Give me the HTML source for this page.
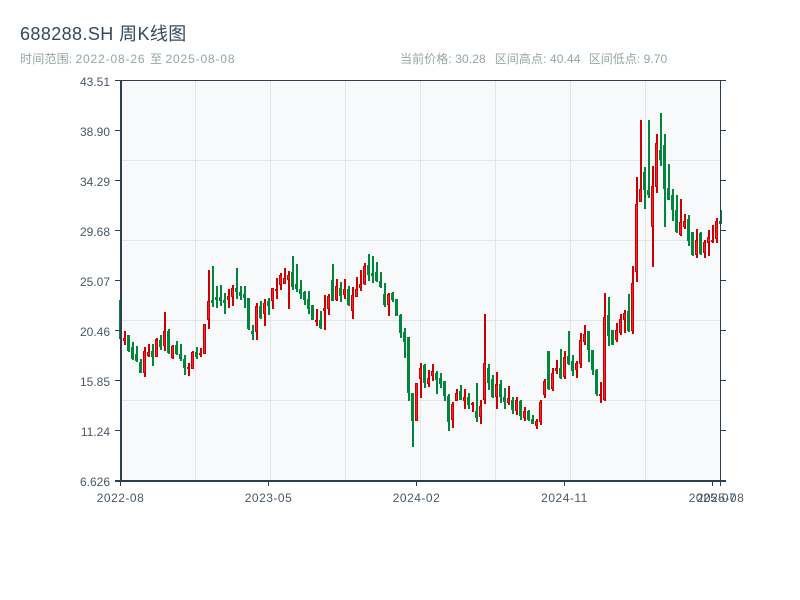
<!DOCTYPE html>
<html lang="zh"><head><meta charset="utf-8"><title>688288.SH 周K线图</title>
<style>html,body{margin:0;padding:0;background:#fff}svg{display:block}text{font-family:"Liberation Sans","Noto Sans CJK SC",sans-serif}</style></head>
<body>
<svg width="800" height="600" viewBox="0 0 800 600" xmlns="http://www.w3.org/2000/svg">
<rect x="120" y="80" width="600" height="400" fill="#f8f9fb"/>
<path shape-rendering="crispEdges" fill="#e1e4e9" d="M195 81h1V480h-1zM270 81h1V480h-1zM345 81h1V480h-1zM420 81h1V480h-1zM495 81h1V480h-1zM570 81h1V480h-1zM645 81h1V480h-1zM122 160H720v1H122zM122 240H720v1H122zM122 320H720v1H122zM122 400H720v1H122z"/>
<path shape-rendering="crispEdges" fill="#00873c" d="M119 300h3V339h-3zM128 335h2V352h-2zM127 335h3V351h-3zM132 342h2V360h-2zM131 347h3V359h-3zM136 346h2V362h-2zM135 354h3V361h-3zM140 359h2V373h-2zM139 362h3V373h-3zM152 344h2V366h-2zM151 351h3V357h-3zM160 335h2V350h-2zM159 340h3V347h-3zM168 329h2V354h-2zM167 331h3V353h-3zM176 341h2V355h-2zM175 345h3V354h-3zM180 344h2V361h-2zM179 354h3V359h-3zM184 355h2V375h-2zM183 359h3V368h-3zM196 347h2V359h-2zM195 352h3V357h-3zM212 266h2V307h-2zM211 300h3V303h-3zM216 286h2V308h-2zM215 297h3V300h-3zM220 285h2V306h-2zM219 297h3V301h-3zM224 293h2V314h-2zM223 300h3V303h-3zM236 268h2V299h-2zM235 288h3V292h-3zM240 286h2V300h-2zM239 292h3V296h-3zM244 286h2V308h-2zM243 294h3V298h-3zM248 298h2V330h-2zM247 298h3V329h-3zM252 325h2V340h-2zM251 331h3V334h-3zM260 301h2V319h-2zM259 306h3V318h-3zM268 298h2V315h-2zM267 301h3V306h-3zM292 256h2V290h-2zM291 272h3V287h-3zM296 264h2V292h-2zM295 284h3V289h-3zM300 280h2V299h-2zM299 289h3V294h-3zM304 291h2V305h-2zM303 292h3V300h-3zM308 291h2V314h-2zM307 299h3V309h-3zM312 305h2V320h-2zM311 305h3V320h-3zM320 311h2V329h-2zM319 320h3V328h-3zM332 264h2V301h-2zM331 280h3V301h-3zM340 282h2V302h-2zM339 288h3V296h-3zM348 286h2V306h-2zM347 289h3V305h-3zM368 254h2V281h-2zM367 265h3V275h-3zM372 256h2V283h-2zM371 273h3V276h-3zM376 262h2V282h-2zM375 272h3V281h-3zM380 272h2V288h-2zM379 281h3V287h-3zM384 283h2V307h-2zM383 294h3V305h-3zM392 292h2V302h-2zM391 293h3V300h-3zM396 299h2V316h-2zM395 299h3V316h-3zM400 314h2V338h-2zM399 315h3V333h-3zM404 328h2V358h-2zM403 332h3V342h-3zM408 337h2V401h-2zM407 337h3V393h-3zM412 393h2V447h-2zM411 393h3V421h-3zM424 364h2V388h-2zM423 365h3V383h-3zM436 371h2V394h-2zM435 373h3V380h-3zM440 373h2V388h-2zM439 378h3V384h-3zM444 381h2V401h-2zM443 381h3V396h-3zM448 394h2V431h-2zM447 396h3V422h-3zM460 385h2V400h-2zM459 391h3V400h-3zM468 393h2V409h-2zM467 397h3V405h-3zM476 383h2V422h-2zM475 411h3V418h-3zM488 364h2V390h-2zM487 368h3V383h-3zM492 375h2V398h-2zM491 379h3V397h-3zM500 380h2V403h-2zM499 384h3V397h-3zM504 388h2V409h-2zM503 397h3V402h-3zM512 397h2V414h-2zM511 400h3V410h-3zM520 400h2V420h-2zM519 401h3V416h-3zM528 410h2V421h-2zM527 411h3V420h-3zM532 415h2V424h-2zM531 419h3V424h-3zM548 351h2V390h-2zM547 351h3V389h-3zM560 349h2V379h-2zM559 368h3V378h-3zM568 331h2V365h-2zM567 356h3V364h-3zM572 355h2V376h-2zM571 361h3V371h-3zM588 331h2V362h-2zM587 331h3V350h-3zM592 350h2V375h-2zM591 350h3V370h-3zM596 369h2V396h-2zM595 370h3V394h-3zM608 297h2V346h-2zM607 315h3V336h-3zM612 330h2V345h-2zM611 330h3V345h-3zM628 294h2V332h-2zM627 311h3V331h-3zM644 167h2V209h-2zM643 172h3V190h-3zM648 120h2V198h-2zM647 190h3V195h-3zM660 113h2V166h-2zM659 150h3V160h-3zM664 134h2V227h-2zM663 145h3V189h-3zM668 164h2V200h-2zM667 188h3V200h-3zM672 189h2V221h-2zM671 195h3V210h-3zM676 195h2V233h-2zM675 210h3V232h-3zM688 215h2V246h-2zM687 219h3V241h-3zM692 232h2V256h-2zM691 232h3V255h-3zM700 232h2V255h-2zM699 233h3V254h-3zM720 210h2V224h-2zM719 221h3V224h-3z"/>
<path shape-rendering="crispEdges" fill="#cc0000" d="M124 331h2V345h-2zM123 338h3V341h-3zM144 347h2V377h-2zM143 351h3V373h-3zM148 344h2V357h-2zM147 352h3V356h-3zM156 338h2V357h-2zM155 339h3V357h-3zM164 312h2V351h-2zM163 331h3V346h-3zM172 345h2V359h-2zM171 346h3V358h-3zM188 363h2V376h-2zM187 367h3V369h-3zM192 351h2V369h-2zM191 352h3V369h-3zM200 348h2V357h-2zM199 353h3V355h-3zM204 324h2V354h-2zM203 324h3V354h-3zM208 270h2V329h-2zM207 301h3V320h-3zM228 289h2V308h-2zM227 296h3V300h-3zM232 285h2V306h-2zM231 288h3V297h-3zM256 303h2V340h-2zM255 306h3V332h-3zM264 299h2V326h-2zM263 303h3V314h-3zM272 288h2V309h-2zM271 288h3V301h-3zM276 278h2V299h-2zM275 289h3V291h-3zM280 273h2V290h-2zM279 275h3V285h-3zM284 268h2V284h-2zM283 278h3V284h-3zM288 271h2V309h-2zM287 275h3V280h-3zM316 309h2V326h-2zM315 320h3V322h-3zM324 295h2V330h-2zM323 308h3V311h-3zM328 294h2V315h-2zM327 296h3V309h-3zM336 279h2V301h-2zM335 286h3V300h-3zM344 279h2V299h-2zM343 289h3V295h-3zM352 287h2V319h-2zM351 295h3V311h-3zM356 277h2V297h-2zM355 289h3V297h-3zM360 270h2V291h-2zM359 284h3V288h-3zM364 263h2V285h-2zM363 266h3V284h-3zM388 293h2V316h-2zM387 294h3V305h-3zM416 383h2V421h-2zM415 383h3V421h-3zM420 363h2V398h-2zM419 368h3V379h-3zM428 370h2V387h-2zM427 378h3V384h-3zM432 364h2V381h-2zM431 371h3V376h-3zM452 402h2V428h-2zM451 404h3V420h-3zM456 389h2V401h-2zM455 393h3V401h-3zM464 389h2V409h-2zM463 397h3V401h-3zM472 402h2V412h-2zM471 403h3V405h-3zM480 400h2V424h-2zM479 406h3V417h-3zM484 314h2V404h-2zM483 363h3V400h-3zM496 372h2V409h-2zM495 384h3V397h-3zM508 386h2V405h-2zM507 398h3V403h-3zM516 397h2V415h-2zM515 400h3V411h-3zM524 407h2V421h-2zM523 411h3V418h-3zM536 419h2V429h-2zM535 421h3V426h-3zM540 400h2V425h-2zM539 402h3V422h-3zM544 379h2V398h-2zM543 381h3V395h-3zM552 368h2V391h-2zM551 373h3V389h-3zM556 360h2V374h-2zM555 368h3V371h-3zM564 351h2V379h-2zM563 357h3V377h-3zM576 361h2V378h-2zM575 363h3V370h-3zM580 333h2V368h-2zM579 340h3V364h-3zM584 325h2V345h-2zM583 334h3V342h-3zM600 382h2V403h-2zM599 394h3V396h-3zM604 293h2V401h-2zM603 317h3V400h-3zM616 323h2V342h-2zM615 330h3V340h-3zM620 314h2V335h-2zM619 319h3V333h-3zM624 310h2V333h-2zM623 313h3V320h-3zM632 266h2V334h-2zM631 283h3V331h-3zM636 177h2V282h-2zM635 204h3V272h-3zM640 120h2V202h-2zM639 189h3V202h-3zM652 166h2V267h-2zM651 186h3V227h-3zM656 134h2V193h-2zM655 143h3V187h-3zM680 199h2V236h-2zM679 222h3V235h-3zM684 214h2V229h-2zM683 221h3V227h-3zM696 229h2V258h-2zM695 240h3V255h-3zM704 240h2V258h-2zM703 242h3V253h-3zM708 230h2V256h-2zM707 237h3V243h-3zM712 225h2V243h-2zM711 240h3V242h-3zM716 218h2V243h-2zM715 221h3V239h-3z"/>
<path shape-rendering="crispEdges" fill="#f5222d" d="M124 339h1V340h-1zM144 352h1V372h-1zM148 353h1V355h-1zM156 340h1V356h-1zM164 332h1V345h-1zM172 347h1V357h-1zM192 353h1V368h-1zM204 325h1V353h-1zM208 302h1V319h-1zM228 297h1V299h-1zM232 289h1V296h-1zM256 307h1V331h-1zM264 304h1V313h-1zM272 289h1V300h-1zM280 276h1V284h-1zM284 279h1V283h-1zM288 276h1V279h-1zM324 309h1V310h-1zM328 297h1V308h-1zM336 287h1V299h-1zM344 290h1V294h-1zM352 296h1V310h-1zM356 290h1V296h-1zM360 285h1V287h-1zM364 267h1V283h-1zM388 295h1V304h-1zM416 384h1V420h-1zM420 369h1V378h-1zM428 379h1V383h-1zM432 372h1V375h-1zM452 405h1V419h-1zM456 394h1V400h-1zM464 398h1V400h-1zM480 407h1V416h-1zM484 364h1V399h-1zM496 385h1V396h-1zM508 399h1V402h-1zM516 401h1V410h-1zM524 412h1V417h-1zM536 422h1V425h-1zM540 403h1V421h-1zM544 382h1V394h-1zM552 374h1V388h-1zM556 369h1V370h-1zM564 358h1V376h-1zM576 364h1V369h-1zM580 341h1V363h-1zM584 335h1V341h-1zM604 318h1V399h-1zM616 331h1V339h-1zM620 320h1V332h-1zM624 314h1V319h-1zM632 284h1V330h-1zM636 205h1V271h-1zM640 190h1V201h-1zM652 187h1V226h-1zM656 144h1V186h-1zM680 223h1V234h-1zM684 222h1V226h-1zM696 241h1V254h-1zM704 243h1V252h-1zM708 238h1V242h-1zM716 222h1V238h-1z"/>
<path shape-rendering="crispEdges" fill="#2c3e50" d="M120 80h2V482h-2zM115 80H726v1H115zM115 480H726v2H115zM720 80h1V482h-1zM115 130h5v1h-5zM115 180h5v1h-5zM115 230h5v1h-5zM115 280h5v1h-5zM115 330h5v1h-5zM115 380h5v1h-5zM115 430h5v1h-5zM721 130h5v1h-5zM721 180h5v1h-5zM721 230h5v1h-5zM721 280h5v1h-5zM721 330h5v1h-5zM721 380h5v1h-5zM721 430h5v1h-5zM120 482h1v4h-1zM268 482h1v4h-1zM416 482h1v4h-1zM564 482h1v4h-1zM712 482h1v4h-1zM720 482h1v4h-1z"/>
<text x="20" y="40" font-size="18" fill="#34495e" letter-spacing=".4">688288.SH 周K线图</text>
<text y="63" font-size="12" fill="#95a5a6"><tspan x="20" letter-spacing=".2">时间范围:</tspan> <tspan x="75.5" letter-spacing=".85">2022-08-26</tspan> <tspan x="150">至</tspan> <tspan x="165.5" letter-spacing=".85">2025-08-08</tspan></text>
<text x="400" y="63" font-size="12" fill="#95a5a6" letter-spacing=".1">当前价格: 30.28</text>
<text x="494.7" y="63" font-size="12" fill="#95a5a6" letter-spacing=".1">区间高点: 40.44</text>
<text x="588.7" y="63" font-size="12" fill="#95a5a6" letter-spacing=".05">区间低点: 9.70</text>
<g font-size="12" fill="#4a5866" text-anchor="end">
<text x="110" y="86">43.51</text><text x="110" y="136">38.90</text><text x="110" y="186">34.29</text><text x="110" y="236">29.68</text><text x="110" y="286">25.07</text><text x="110" y="336">20.46</text><text x="110" y="386">15.85</text><text x="110" y="436">11.24</text><text x="110" y="486">6.626</text>
</g>
<g font-size="12" fill="#4a5866" text-anchor="middle" letter-spacing=".5">
<text x="120.5" y="502">2022-08</text><text x="268.5" y="502">2023-05</text><text x="416.5" y="502">2024-02</text><text x="564.5" y="502">2024-11</text><text x="712.5" y="502">2025-07</text><text x="720.5" y="502">2025-08</text>
</g>
</svg>
</body></html>
